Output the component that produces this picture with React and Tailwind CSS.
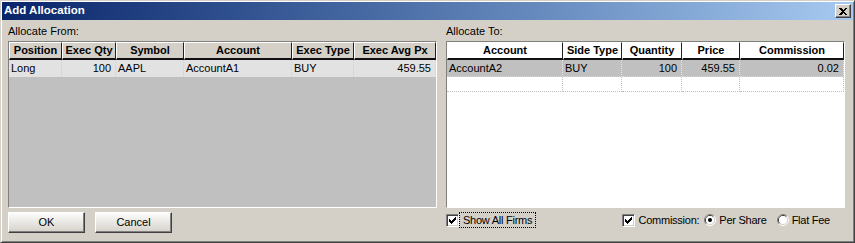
import React from 'react';

const fromCols = [
  { title: 'Position', w: 53, align: 'left' },
  { title: 'Exec Qty', w: 54, align: 'right' },
  { title: 'Symbol', w: 68, align: 'left' },
  { title: 'Account', w: 108, align: 'left' },
  { title: 'Exec Type', w: 62, align: 'left' },
  { title: 'Exec Avg Px', w: 82, align: 'right' },
];
const fromRow = ['Long', '100', 'AAPL', 'AccountA1', 'BUY', '459.55'];

const toCols = [
  { title: 'Account', w: 116, align: 'left' },
  { title: 'Side Type', w: 59, align: 'left' },
  { title: 'Quantity', w: 60, align: 'right' },
  { title: 'Price', w: 58, align: 'right' },
  { title: 'Commission', w: 104, align: 'right' },
];
const toRow = ['AccountA2', 'BUY', '100', '459.55', '0.02'];

const checkPixels = [
  [6], [5, 6], [0, 4, 5, 6], [0, 1, 3, 4, 5], [0, 1, 2, 3, 4], [1, 2, 3], [2],
];

const CheckBox = () => (
  <span className="w-[13px] h-[13px] shrink-0 flex items-center justify-center bg-white border border-t-[#808080] border-l-[#808080] border-r-white border-b-white shadow-[inset_1px_1px_#404040,inset_-1px_-1px_#d4d0c8]">
    <svg width="7" height="7" viewBox="0 0 7 7" shapeRendering="crispEdges">
      {checkPixels.map((xs, y) =>
        xs.map(x => <rect key={`${x}-${y}`} x={x} y={y} width="1" height="1" fill="#000" />)
      )}
    </svg>
  </span>
);

const Radio = ({ on }) => (
  <svg width="12" height="12" viewBox="0 0 12 12" className="shrink-0">
    <path d="M2.11 9.89 A5.5 5.5 0 0 1 9.89 2.11" fill="none" stroke="#808080" strokeWidth="1" />
    <path d="M9.89 2.11 A5.5 5.5 0 0 1 2.11 9.89" fill="none" stroke="#ffffff" strokeWidth="1" />
    <path d="M2.82 9.18 A4.5 4.5 0 0 1 9.18 2.82" fill="none" stroke="#404040" strokeWidth="1" />
    <path d="M9.18 2.82 A4.5 4.5 0 0 1 2.82 9.18" fill="none" stroke="#d4d0c8" strokeWidth="1" />
    <circle cx="6" cy="6" r="4" fill="#fff" />
    {on && <circle cx="6" cy="6" r="2" fill="#000" />}
  </svg>
);

const Button = ({ children }) => (
  <button className="w-[77px] h-[21px] text-[11px] text-black bg-gradient-to-b from-[#fcfcfb] to-[#d6d2ca] border border-t-white border-l-white border-r-[#404040] border-b-[#404040] shadow-[inset_-1px_-1px_#808080]">
    {children}
  </button>
);

const Grid = ({ cols, row, light }) => (
  <div className={`h-[167px] flex flex-col border border-t-[#808080] border-l-[#808080] border-r-white border-b-white overflow-hidden ${light ? 'bg-white' : 'bg-[#c0c0c0]'}`}>
    <div className="flex h-[18px] shrink-0">
      {cols.map(c => (
        <div
          key={c.title}
          style={{ width: c.w }}
          className={`shrink-0 flex items-center justify-center font-bold text-[11px] leading-none border-t border-l border-t-white border-l-white border-r border-r-[#202020] border-b-2 border-b-[#101010] ${light ? 'bg-white' : 'bg-[#d4d0c8]'}`}
        >
          {c.title}
        </div>
      ))}
    </div>
    <div className={`flex h-[17px] shrink-0 ${light ? 'bg-[#c0c0c0]' : 'bg-[#e2e2e2]'}`}>
      {cols.map((c, i) => (
        <div
          key={c.title}
          style={{ width: c.w }}
          className={`shrink-0 flex items-center text-[11px] leading-none border-r border-dotted ${light ? 'border-r-[#e8e8e8] border-b border-b-[#d8d8d8]' : 'border-r-[#cfcfcf]'} ${c.align === 'right' ? 'justify-end pr-[4px]' : 'pl-[2px]'}`}
        >
          {row[i]}
        </div>
      ))}
    </div>
    {light && (
      <div className="flex h-[15px] shrink-0">
        {cols.map(c => (
          <div
            key={c.title}
            style={{ width: c.w }}
            className="shrink-0 border-r border-b border-dotted border-[#c0c0c0]"
          />
        ))}
      </div>
    )}
  </div>
);

export default function App() {
  return (
    <div
      className="w-[855px] h-[243px] bg-[#d4d0c8] p-[1px] border border-t-[#d4d0c8] border-l-[#d4d0c8] border-r-[#404040] border-b-[#404040] shadow-[inset_1px_1px_#ffffff,inset_-1px_-1px_#808080] flex flex-col text-black"
      style={{ fontFamily: '"Liberation Sans", Arial, sans-serif' }}
    >
      <div className="h-[18px] shrink-0 flex items-center justify-between bg-gradient-to-r from-[#0a246a] to-[#a6caf0]">
        <span className="pl-[2px] text-white font-bold text-[11.5px] leading-none">Add Allocation</span>
        <button className="mr-[2px] w-[16px] h-[14px] flex items-center justify-center bg-[#d4d0c8] border border-t-white border-l-white border-r-[#404040] border-b-[#404040] shadow-[inset_-1px_-1px_#808080]">
          <svg width="8" height="7" viewBox="0 0 8 7" shapeRendering="crispEdges">
            <path d="M0 0 H2 L4 2 L6 0 H8 L5 3.5 L8 7 H6 L4 5 L2 7 H0 L3 3.5 Z" fill="#000" />
          </svg>
        </button>
      </div>

      <div className="flex-1 flex gap-[9px] px-[6px]">
        <div className="w-[429px] flex flex-col">
          <div className="h-[21px] pt-[5px] text-[11px] leading-[13px]">Allocate From:</div>
          <Grid cols={fromCols} row={fromRow} />
          <div className="flex gap-[10px] pt-[4px]">
            <Button>OK</Button>
            <Button>Cancel</Button>
          </div>
        </div>

        <div className="w-[399px] flex flex-col">
          <div className="h-[21px] pt-[5px] text-[11px] leading-[13px]">Allocate To:</div>
          <Grid cols={toCols} row={toRow} light />
          <div className="flex items-center justify-between pt-[4px] pr-[15px] text-[11px] leading-none tracking-[-0.25px]">
            <div className="flex items-center h-[16px]">
              <CheckBox />
              <span className="h-[16px] flex items-center px-[3px] border border-dotted border-black">Show All Firms</span>
            </div>
            <div className="flex items-center h-[16px]">
              <CheckBox />
              <span className="ml-[4px]">Commission:</span>
              <span className="ml-[5px]"><Radio on /></span>
              <span className="ml-[3px]">Per Share</span>
              <span className="ml-[10px]"><Radio /></span>
              <span className="ml-[3px]">Flat Fee</span>
            </div>
          </div>
        </div>
      </div>
    </div>
  );
}
